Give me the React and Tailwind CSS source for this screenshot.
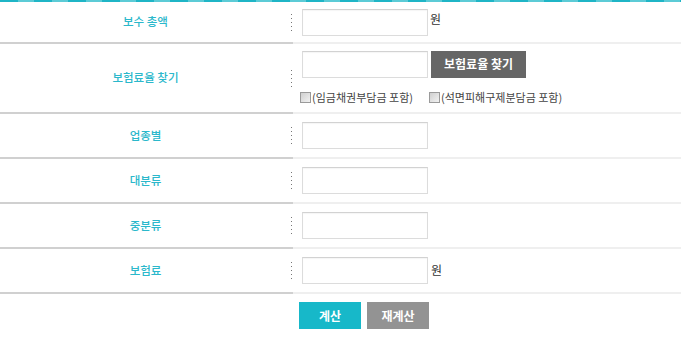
const font = { fontFamily: '"Noto Sans CJK KR", "Noto Sans", sans-serif' };

function Dots() {
  return <span className="w-px h-[17px] mr-[1px] bg-[repeating-linear-gradient(180deg,#777_0px,#777_1px,transparent_1px,transparent_4px)]" />;
}

function Field() {
  return (
    <div className="w-[126px] h-[27px] border border-[#dcdcdc] border-t-[#d2d2d2] bg-white shadow-[inset_0_1px_1px_rgba(0,0,0,0.04)]" />
  );
}

function Check({ label }) {
  return (
    <label className="flex items-center text-[11px] text-[#444]">
      <span className="w-[11px] h-[11px] border border-[#9a9a9a] bg-[linear-gradient(135deg,#cfcfcf,#f2f2f2)] mr-[1px]" />
      {label}
    </label>
  );
}

function Row({ label, height, children }) {
  return (
    <div className="flex" style={{ height }}>
      <div className="w-[293px] flex items-center border-b-2 border-[#d0d0d0]">
        <span className="flex-1 text-center text-[11.5px] text-[#2bb8cb] font-medium">{label}</span>
        <Dots />
      </div>
      <div className="flex-1 flex flex-col justify-center pl-[9px] border-b-2 border-[#efefef]">
        {children}
      </div>
    </div>
  );
}

export default function App() {
  return (
    <div className="w-[681px] h-[342px] bg-white" style={font}>
      <div className="h-[2px] bg-[repeating-linear-gradient(90deg,#1fb5c6_0px,#1fb5c6_18px,#5ccbd6_18px,#5ccbd6_34px)]" />
      <Row label="보수 총액" height={42}>
        <div className="flex items-center">
          <Field />
          <span className="ml-[2px] text-[12px] text-[#333] -mt-[6px]">원</span>
        </div>
      </Row>
      <Row label="보험료율 찾기" height={70}>
        <div className="flex items-center">
          <Field />
          <button className="ml-[3px] w-[95px] h-[27px] bg-[#666666] text-white text-[12px] font-bold">보험료율 찾기</button>
        </div>
        <div className="flex items-center mt-[11px] gap-[16px] -ml-[2px]">
          <Check label="(임금채권부담금 포함)" />
          <Check label="(석면피해구제분담금 포함)" />
        </div>
      </Row>
      <Row label="업종별" height={45}>
        <Field />
      </Row>
      <Row label="대분류" height={45}>
        <Field />
      </Row>
      <Row label="중분류" height={45}>
        <Field />
      </Row>
      <Row label="보험료" height={45}>
        <div className="flex items-center">
          <Field />
          <span className="ml-[3px] text-[12px] text-[#333] -mt-[2px]">원</span>
        </div>
      </Row>
      <div className="flex pl-[299px] pt-[8px] gap-[6px]">
        <button className="w-[62px] h-[27px] bg-[#17b8c9] text-white text-[12px] font-bold">계산</button>
        <button className="w-[62px] h-[27px] bg-[#939393] text-white text-[12px] font-bold">재계산</button>
      </div>
    </div>
  );
}
